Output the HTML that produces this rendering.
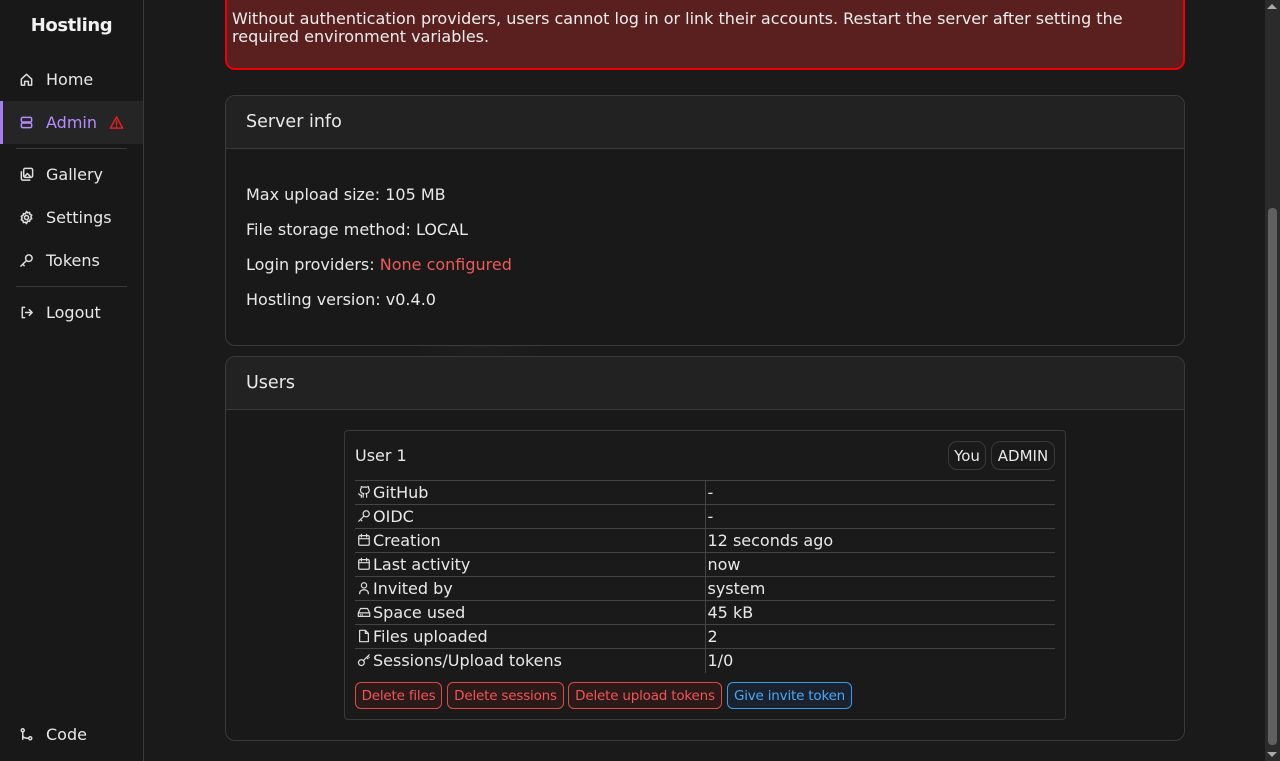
<!DOCTYPE html>
<html><head><meta charset="utf-8"><style>
*{box-sizing:border-box;margin:0;padding:0}
html,body{width:1280px;height:761px;overflow:hidden;background:#1c1b1c;font-family:"DejaVu Sans","Liberation Sans",sans-serif;color:#e8e8e8;font-size:16px}
.abs{position:absolute}
#side{left:0;top:0;width:144px;height:761px;background:#181818;border-right:1px solid #3a3a3a}
.logo{left:0;width:143px;top:15px;text-align:center;font-size:18px;font-weight:600;color:#f2f2f2;letter-spacing:-0.4px}
.nav{left:0;width:143px;height:43px;display:flex;align-items:center;padding-left:19px}
.nav svg{width:15px;height:15px;margin-right:12px;fill:none;stroke:#ddd;stroke-width:1.6;stroke-linecap:round;stroke-linejoin:round}
.nav.act{background:#252525;border-left:3px solid #a77cf0;padding-left:16px;color:#b68bff}
.nav.act svg{stroke:#b68bff}
.sep{left:16px;width:111px;height:1px;background:#3a3a3a}
.bg{left:144px;top:0;width:1121px;height:761px;background:radial-gradient(circle at 30% 40%,#222 0,transparent 80px),radial-gradient(circle at 80% 70%,#222 0,transparent 90px),#1b1a1b}
#sb{left:1265px;top:0;width:15px;height:761px;background:#2b2b2b}
#thumb{left:1268px;top:208px;width:9px;height:537px;background:#606060;border-radius:4px}
.alert{left:225px;top:-20px;width:960px;height:90px;background:#5a2020;border:2px solid #e00;border-radius:10px;padding:28px 5px 0 5px;font-size:16px;line-height:18px;color:#eee}
.card{left:225px;width:960px;border:1px solid #3a3a3a;border-radius:10px;background:#191919;overflow:hidden}
.ch{height:53px;background:#222;border-bottom:1px solid #3a3a3a;padding:16px 20px 0;font-size:17.5px}
.row{position:absolute;left:20px;font-size:16px}
.uc{left:344px;top:430px;width:722px;height:290px;border:1px solid #3a3a3a;border-radius:4px;background:#1a1a1a}
.pill{top:441px;height:29px;border:1px solid #3a3a3a;border-radius:9px;padding:5px 0;font-size:15px;background:#1a1a1a;text-align:center}
table{position:absolute;left:355px;top:480px;width:700px;border-collapse:collapse}
td{height:24px;border-top:1px solid #444;padding:0 2px;font-size:16px;line-height:22px;white-space:nowrap}
td:first-child{width:350px;border-right:1px solid #444;padding-left:0}
td svg{width:14px;height:14px;vertical-align:-1px;fill:none;stroke:#ddd;stroke-width:1.4;stroke-linecap:round;stroke-linejoin:round;margin-right:2px;margin-left:2px}
.btn{top:682px;height:27px;border:1px solid #e04848;border-radius:6px;color:#f25555;background:#2a1a1a;font-size:13.5px;padding:5px 0;white-space:nowrap;text-align:center;letter-spacing:-0.2px}
.btn.b{border-color:#3a9be8;color:#4aa8f5;background:#1a2230}
</style></head><body>
<div class="abs bg"></div>
<div id="side" class="abs">
<div class="abs logo">Hostling</div>
<div class="abs nav" style="top:58px"><svg viewBox="0 0 16 16"><path d="M2.5 7.5 8 2.5l5.5 5V14h-3.5V10h-4v4H2.5z"/></svg>Home</div>
<div class="abs nav act" style="top:101px"><svg viewBox="0 0 16 16"><rect x="2.5" y="2.5" width="11" height="5" rx="1.5"/><rect x="2.5" y="8.5" width="11" height="5" rx="1.5"/></svg>Admin<svg viewBox="0 0 16 16" style="margin-left:12px;stroke:#e02020"><path d="M8 2 14.5 14h-13z"/><path d="M8 6.5v3.5M8 12v.2"/></svg></div>
<div class="abs sep" style="top:148px"></div>
<div class="abs nav" style="top:153px"><svg viewBox="0 0 16 16"><rect x="5" y="1.5" width="9.5" height="9.5" rx="1.5"/><path d="M2.5 5v7.5a1.5 1.5 0 0 0 1.5 1.5h7.5M6 10l3-3 3 3"/></svg>Gallery</div>
<div class="abs nav" style="top:196px"><svg viewBox="0 0 16 16"><circle cx="8" cy="8" r="2.2"/><path d="M8 1.5l1.3 1.6 2-.5.4 2 1.9.9-.9 1.9.9 1.9-1.9.9-.4 2-2-.5L8 14.5l-1.3-1.6-2 .5-.4-2-1.9-.9.9-1.9-.9-1.9 1.9-.9.4-2 2 .5z"/></svg>Settings</div>
<div class="abs nav" style="top:239px"><svg viewBox="0 0 16 16"><circle cx="10.5" cy="5.5" r="3.5"/><path d="M8 8 2 14M4 12l1.5 1.5"/></svg>Tokens</div>
<div class="abs sep" style="top:286px"></div>
<div class="abs nav" style="top:291px"><svg viewBox="0 0 16 16"><path d="M6 2.5H3.5v11H6M7 8h7M11 5l3 3-3 3"/></svg>Logout</div>
<div class="abs nav" style="top:713px"><svg viewBox="0 0 16 16"><circle cx="4" cy="3.5" r="1.6"/><circle cx="12" cy="12" r="1.6"/><path d="M4 5.1V13M4 9c0 2 2 3 6.4 3"/></svg>Code</div>
</div>
<div class="abs alert">Without authentication providers, users cannot log in or link their accounts. Restart the server after setting the required environment variables.</div>

<div class="abs card" style="top:95px;height:251px"><div class="ch">Server info</div>
<div class="row" style="top:89px">Max upload size: 105 MB</div>
<div class="row" style="top:124px">File storage method: LOCAL</div>
<div class="row" style="top:159px">Login providers: <span style="color:#ee5a5a">None configured</span></div>
<div class="row" style="top:194px">Hostling version: v0.4.0</div>
</div>

<div class="abs card" style="top:356px;height:385px"><div class="ch">Users</div></div>
<div class="abs uc"></div>
<div class="abs" style="left:355px;top:446px;font-size:16px">User 1</div>
<div class="abs pill" style="left:948px;width:38px">You</div>
<div class="abs pill" style="left:991px;width:64px">ADMIN</div>
<table>
<tr><td><svg viewBox="0 0 16 16"><path d="M5 14v-2.5c-2 .5-2.5-1-3-1.5M11 14v-2.5c0-1-.3-1.3-.8-1.6 2.3-.3 3.8-1.1 3.8-4a3 3 0 0 0-.8-2.1c.1-.7.1-1.4-.2-2-0 0-.8-.1-2 .8a8 8 0 0 0-4 0C5.8 1.7 5 1.8 5 1.8c-.3.6-.3 1.3-.2 2a3 3 0 0 0-.8 2.1c0 2.9 1.5 3.7 3.8 4-.5.3-.8.8-.8 1.6V14"/></svg>GitHub</td><td>-</td></tr>
<tr><td><svg viewBox="0 0 16 16"><circle cx="10.5" cy="5.5" r="3.5"/><path d="M8 8 2 14M4 12l1.5 1.5"/></svg>OIDC</td><td>-</td></tr>
<tr><td><svg viewBox="0 0 16 16"><rect x="2" y="3" width="12" height="11" rx="1.5"/><path d="M2 6.5h12M5 1.5v3M11 1.5v3"/></svg>Creation</td><td>12 seconds ago</td></tr>
<tr><td><svg viewBox="0 0 16 16"><rect x="2" y="3" width="12" height="11" rx="1.5"/><path d="M2 6.5h12M5 1.5v3M11 1.5v3"/></svg>Last activity</td><td>now</td></tr>
<tr><td><svg viewBox="0 0 16 16"><circle cx="8" cy="5" r="3"/><path d="M3 14.5c0-3 2.2-4.5 5-4.5s5 1.5 5 4.5"/></svg>Invited by</td><td>system</td></tr>
<tr><td><svg viewBox="0 0 16 16"><path d="M1.5 9 4 4h8l2.5 5v4h-13zM1.5 9h13M4 11.3h.2M6 11.3h.2"/></svg>Space used</td><td>45 kB</td></tr>
<tr><td><svg viewBox="0 0 16 16"><path d="M3 1.5h6.5L13 5v9.5H3zM9.5 1.5V5H13"/></svg>Files uploaded</td><td>2</td></tr>
<tr><td><svg viewBox="0 0 16 16"><circle cx="5" cy="11" r="3.3"/><path d="M7.3 8.7 14 2M11 5l1.5 1.5M12.5 3.5 14 5"/></svg>Sessions/Upload tokens</td><td>1/0</td></tr>
</table>
<div class="abs btn" style="left:355px;width:87px">Delete files</div>
<div class="abs btn" style="left:447px;width:117px">Delete sessions</div>
<div class="abs btn" style="left:568px;width:154px">Delete upload tokens</div>
<div class="abs btn b" style="left:727px;width:125px">Give invite token</div>

<div id="sb" class="abs"></div>
<div id="thumb" class="abs"></div>
<div class="abs" style="left:1267px;top:4px;width:0;height:0;border-left:5px solid transparent;border-right:5px solid transparent;border-bottom:5px solid #aaa"></div>
<div class="abs" style="left:1267px;top:752px;width:0;height:0;border-left:5px solid transparent;border-right:5px solid transparent;border-top:5px solid #aaa"></div>
</body></html>
